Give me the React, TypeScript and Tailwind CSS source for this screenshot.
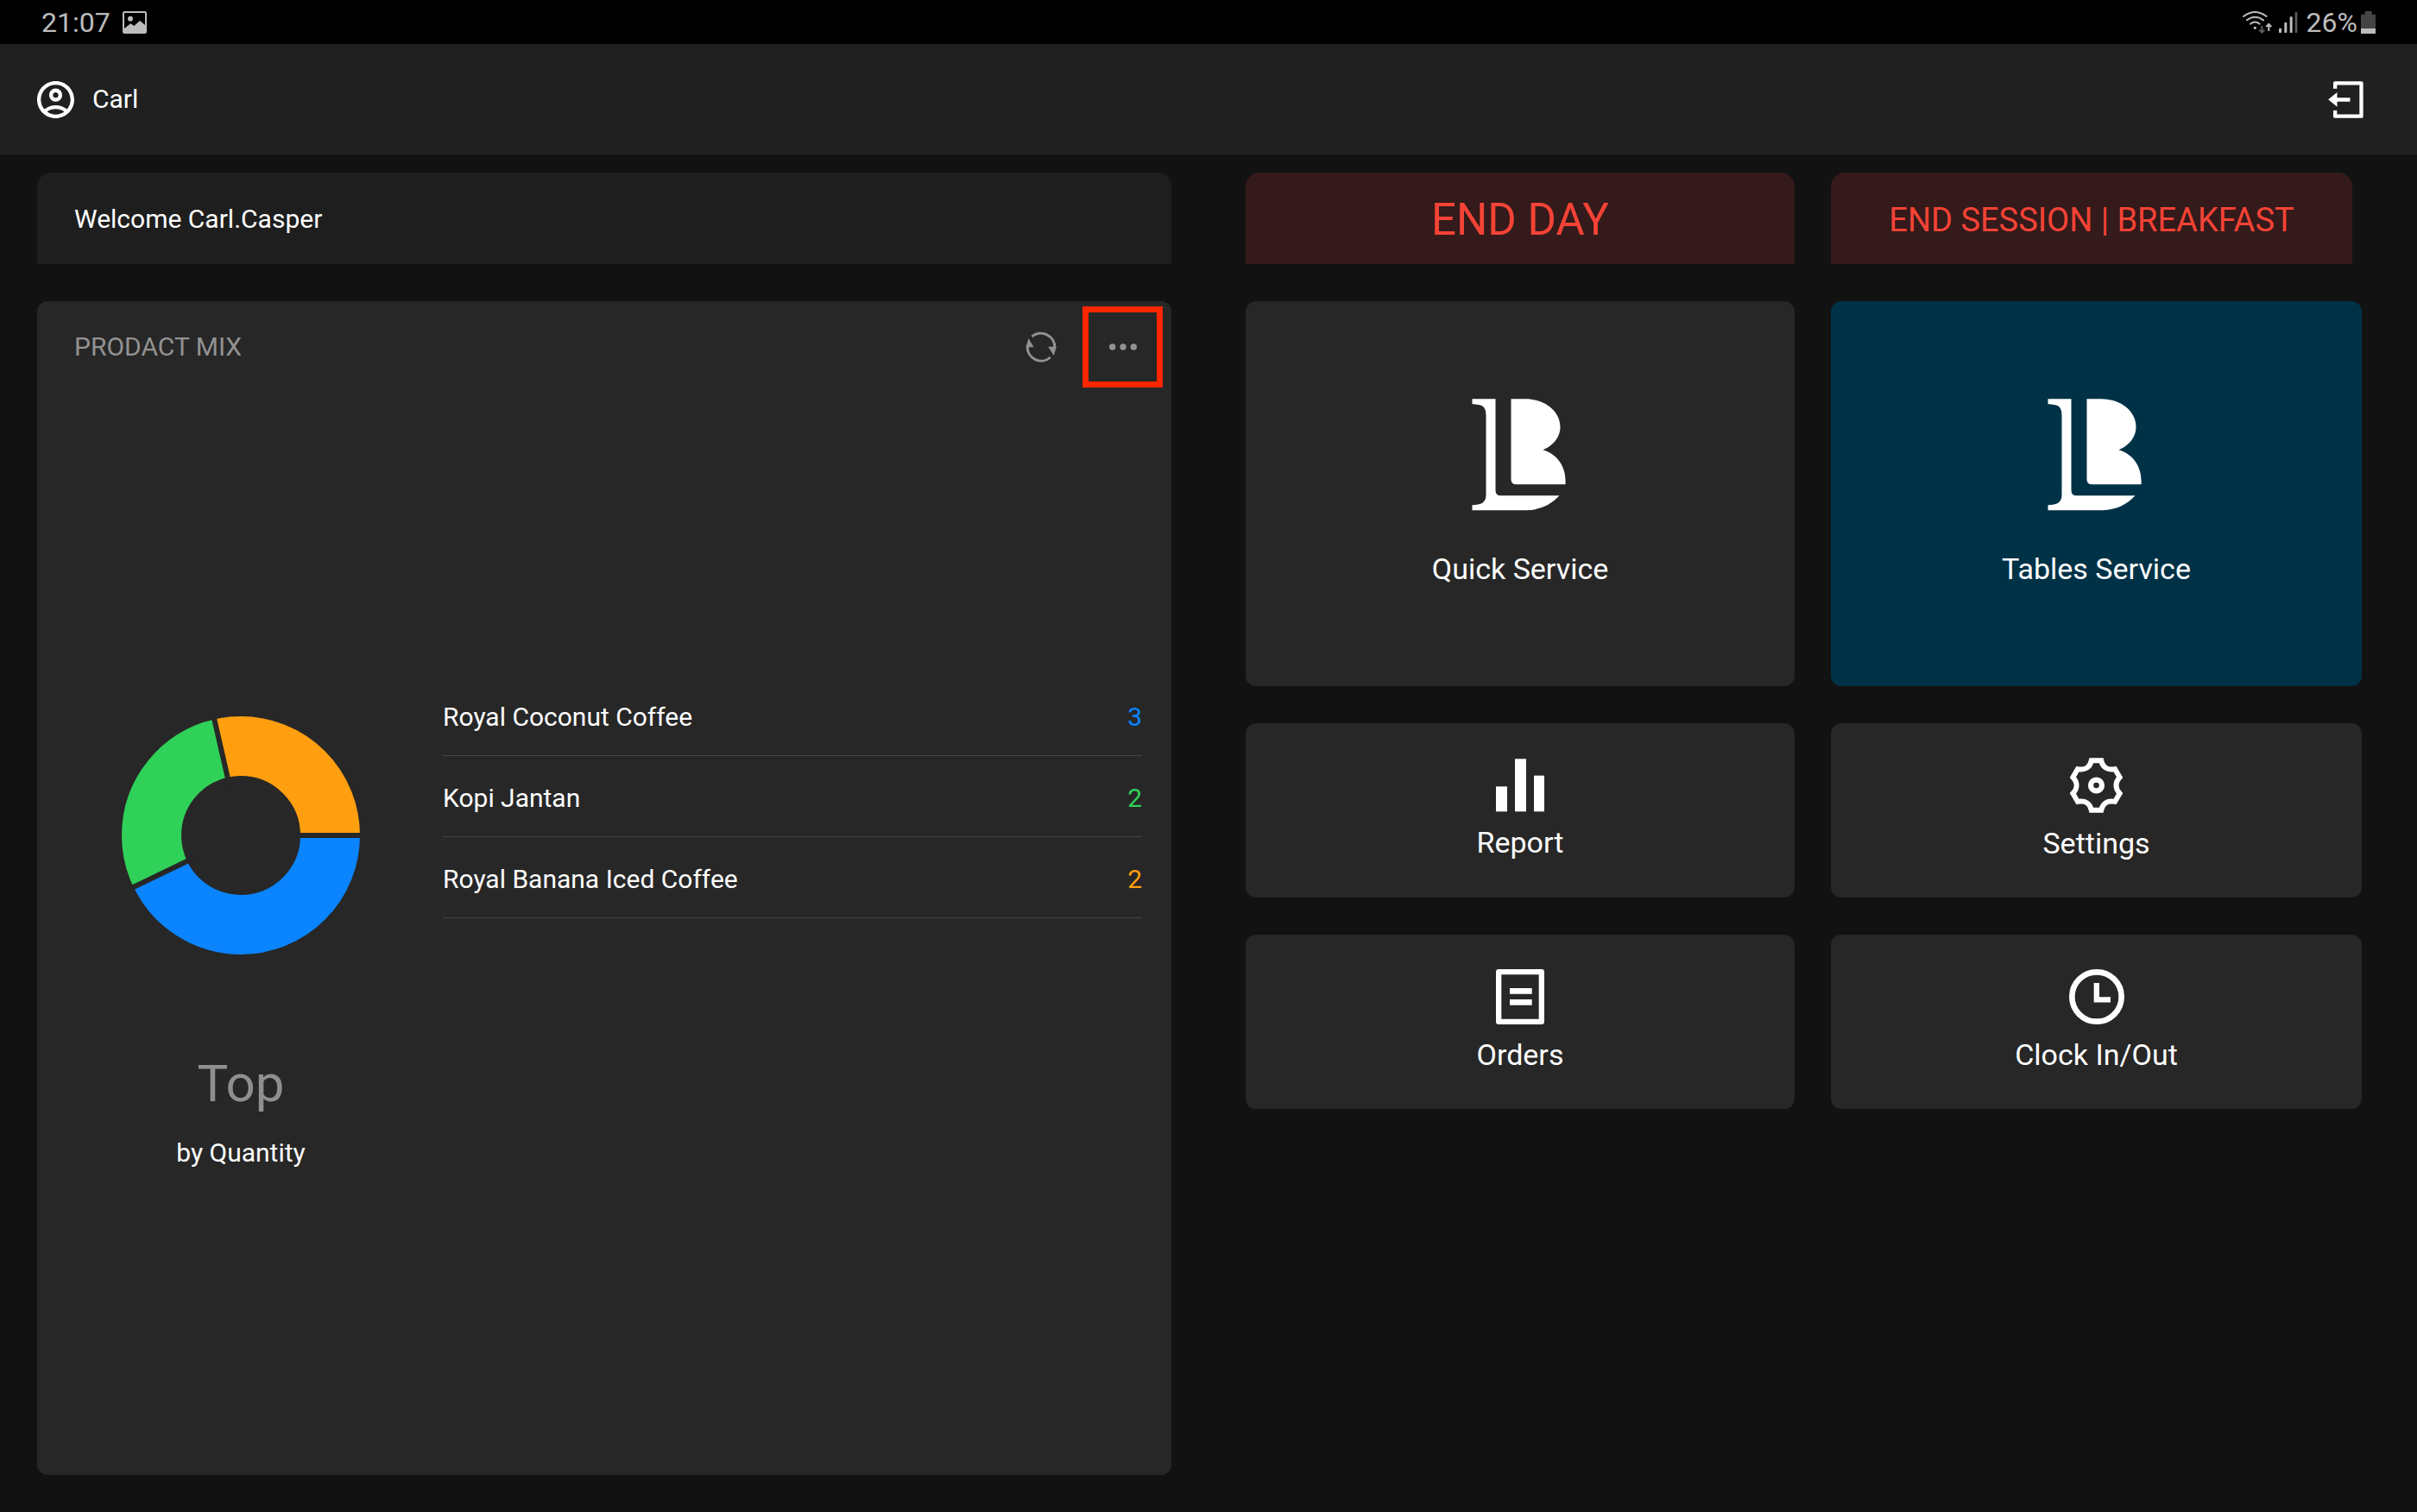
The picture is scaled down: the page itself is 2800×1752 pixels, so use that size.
import React from 'react';

interface MixItem {
  name: string;
  qty: number;
  color: string;
  textClass: string;
}

const mix: MixItem[] = [
  { name: 'Royal Coconut Coffee', qty: 3, color: '#0a84ff', textClass: 'text-[#0a84ff]' },
  { name: 'Kopi Jantan', qty: 2, color: '#30d158', textClass: 'text-[#30d158]' },
  { name: 'Royal Banana Iced Coffee', qty: 2, color: '#ff9f0f', textClass: 'text-[#ff9f0f]' },
];

const ImageIcon = () => (
  <svg viewBox="426 36 84 78" className="w-7 h-[26px]" aria-hidden="true">
    <rect x="429" y="39" width="78" height="72" rx="4" fill="none" stroke="#bdbdbd" strokeWidth="6" />
    <circle cx="453" cy="62" r="9" fill="#bdbdbd" />
    <path d="M432 96 L454 79 L466 87 L486 69 L504 84 V110 H432 Z" fill="#bdbdbd" />
  </svg>
);

const WifiIcon = () => (
  <svg viewBox="111 33 102 78" className="w-[34px] h-[26px]" aria-hidden="true">
    <g fill="none" stroke="#bdbdbd" strokeWidth="6" strokeLinecap="round">
      <path d="M114 51 Q154 21 194 51" />
      <path d="M126 64 Q154 42 183 64" />
      <path d="M138 77 Q154 64 170 77" />
    </g>
    <circle cx="154" cy="91" r="5" fill="#bdbdbd" />
    <path d="M178 84 V106 M169 98 L178 107 L187 98" fill="none" stroke="#5c5c5c" strokeWidth="6" />
    <path d="M202 102 V79 M193 87 L202 78 L211 87" fill="none" stroke="#bdbdbd" strokeWidth="6" />
  </svg>
);

const SignalIcon = () => (
  <svg viewBox="239 39 66 72" className="w-[22px] h-6" aria-hidden="true">
    <g fill="#bdbdbd">
      <rect x="239" y="95" width="9" height="16" rx="2" />
      <rect x="258" y="75" width="9" height="36" rx="2" />
      <rect x="277" y="55" width="9" height="56" rx="2" />
    </g>
    <rect x="295" y="39" width="8" height="72" rx="2" fill="#5c5c5c" />
  </svg>
);

const BatteryIcon = () => (
  <svg viewBox="525 33 51 78" className="w-[17px] h-[26px]" aria-hidden="true">
    <path d="M539 33 H563 V44 H576 V93 H525 V44 H539 Z" fill="#444444" />
    <rect x="525" y="93" width="51" height="18" fill="#bdbdbd" />
  </svg>
);

const AccountIcon = () => (
  <svg viewBox="2 2 20 20" className="w-[43px] h-[43px]" fill="currentColor" aria-hidden="true">
    <path d="M12 2C6.48 2 2 6.48 2 12s4.48 10 10 10 10-4.48 10-10S17.52 2 12 2zM7.35 18.5C8.66 17.56 10.26 17 12 17s3.34.56 4.65 1.5c-1.31.94-2.91 1.5-4.65 1.5s-3.34-.56-4.65-1.5zm10.79-1.38C16.45 15.8 14.32 15 12 15s-4.45.8-6.14 2.12C4.7 15.73 4 13.95 4 12c0-4.42 3.58-8 8-8s8 3.58 8 8c0 1.95-.7 3.73-1.86 5.12z" />
    <path d="M12 6c-1.93 0-3.5 1.57-3.5 3.5S10.07 13 12 13s3.5-1.57 3.5-3.5S13.93 6 12 6zm0 5c-.83 0-1.5-.67-1.5-1.5S11.17 8 12 8s1.5.67 1.5 1.5S12.83 11 12 11z" />
  </svg>
);

const LogoutIcon = () => (
  <svg viewBox="412 279 122 129" className="w-[41px] h-[43px]" aria-hidden="true">
    <path d="M436 305 V286 H527 V401 H436 V381" fill="none" stroke="currentColor" strokeWidth="13" strokeLinejoin="round" />
    <path d="M412 343 L443 318 V337 H488 V350 H443 V368 Z" fill="currentColor" />
  </svg>
);

const RefreshIcon = () => (
  <svg viewBox="143 162 107 108" className="w-9 h-9" aria-hidden="true">
    <g fill="none" stroke="currentColor" strokeWidth="9">
      <path d="M165 180 A48 48 0 0 1 244 218" />
      <path d="M229 252 A48 48 0 0 1 149 214" />
    </g>
    <path d="M221 215 H250 L241 246 Z M144 217 L153 186 L171 217 Z" fill="currentColor" />
  </svg>
);

const DotsIcon = () => (
  <svg viewBox="431 205 95 22" className="w-8 h-2" fill="currentColor" aria-hidden="true">
    <circle cx="442" cy="216" r="11" />
    <circle cx="478.5" cy="216" r="11" />
    <circle cx="515" cy="216" r="11" />
  </svg>
);

const BrandLogo = () => (
  <svg viewBox="194 97 338 390" className="w-[113px] h-[130px]" fill="currentColor" aria-hidden="true">
    <path d="M195 98 H276 V415 Q276 434 294 434 H498 Q455 482 385 485 H195 V467 C226 465 243 460 243 430 V155 C243 120 226 118 195 116 Z" />
    <path d="M330 98 H380 C450 98 501 142 501 195 C501 230 478 259 441 275 C492 290 523 335 519 395 H348 Q330 395 330 377 Z" />
  </svg>
);

const ReportIcon = () => (
  <svg viewBox="129 89 168 186" className="w-14 h-[62px]" fill="currentColor" aria-hidden="true">
    <rect x="129" y="186" width="39" height="87" />
    <rect x="195" y="90" width="39" height="183" />
    <rect x="261" y="148" width="36" height="125" />
  </svg>
);

const SettingsIcon = () => (
  <svg viewBox="115 87 184 192" className="w-[61px] h-16" fill="none" stroke="currentColor" aria-hidden="true">
    <path
      d="M190 96 H224 C228 118 245 132 272 126 L289 155 C272 172 272 194 289 211 L272 240 C245 234 228 248 224 270 H190 C186 248 169 234 142 240 L125 211 C142 194 142 172 125 155 L142 126 C169 132 186 118 190 96 Z"
      strokeWidth="18"
    />
    <circle cx="207" cy="183" r="19.5" strokeWidth="19" />
  </svg>
);

const OrdersIcon = () => (
  <svg viewBox="129 99 168 192" className="w-14 h-16" fill="none" stroke="currentColor" aria-hidden="true">
    <rect x="138.5" y="108.5" width="149" height="173" strokeWidth="19" strokeLinejoin="round" />
    <path d="M177 175 H254 M177 214 H254" strokeWidth="20" />
  </svg>
);

const ClockIcon = () => (
  <svg viewBox="228 99 192 192" className="w-16 h-16" fill="none" stroke="currentColor" aria-hidden="true">
    <circle cx="324" cy="195" r="86" strokeWidth="20" />
    <path d="M323.5 147 V205 H372" strokeWidth="19" />
  </svg>
);

const Donut: React.FC<{ items: MixItem[] }> = ({ items }) => {
  const total = items.reduce((sum, it) => sum + it.qty, 0);
  const starts = items.map((_, idx) => items.slice(0, idx).reduce((sum, it) => sum + it.qty, 0));

  return (
    <svg viewBox="-138 -138 276 276" className="w-[276px] h-[276px]" role="img" aria-label="Product mix">
      {items.map((it, idx) => (
        <circle
          key={it.name}
          r="103.5"
          fill="none"
          stroke={it.color}
          strokeWidth="69"
          pathLength={total}
          strokeDasharray={`${it.qty} ${total - it.qty}`}
          strokeDashoffset={-starts[idx]}
        />
      ))}
      {/* gaps between the slices */}
      {starts.map((start) => (
        <line
          key={start}
          x1="60"
          x2="140"
          stroke="#272727"
          strokeWidth="6"
          transform={`rotate(${(start / total) * 360})`}
        />
      ))}
    </svg>
  );
};

const ServiceTile: React.FC<{ label: string; active?: boolean }> = ({ label, active }) => (
  <button
    className={`h-[446px] pb-1 rounded-xl flex flex-col items-center justify-center gap-[47px] ${
      active ? 'bg-[#003247]' : 'bg-[#272727]'
    }`}
  >
    <BrandLogo />
    <span className="text-[34px] leading-10">{label}</span>
  </button>
);

const MenuTile: React.FC<{ label: string; icon: React.ReactNode }> = ({ label, icon }) => (
  <button className="h-[202px] pb-1 rounded-xl bg-[#272727] flex flex-col items-center justify-center gap-[15px]">
    {icon}
    <span className="text-[34px] leading-10">{label}</span>
  </button>
);

const App: React.FC = () => {
  return (
    <div className="min-h-screen flex flex-col bg-[#121212] text-white font-[Roboto,sans-serif]">
      <div className="h-[51px] px-12 flex items-center justify-between bg-black text-[#bdbdbd] text-[32px] leading-9">
        <div className="flex items-center gap-[14px]">
          <span>21:07</span>
          <ImageIcon />
        </div>
        <div className="flex items-center">
          <WifiIcon />
          <span className="ml-2 mr-[10px]">
            <SignalIcon />
          </span>
          <span className="mr-1">26%</span>
          <BatteryIcon />
        </div>
      </div>

      <header className="h-32 pl-[43px] pr-[62px] flex items-center justify-between bg-[#202020]">
        <button className="flex items-center gap-[21px] text-[30px] leading-9">
          <AccountIcon />
          <span>Carl</span>
        </button>
        <button aria-label="Log out">
          <LogoutIcon />
        </button>
      </header>

      <main className="flex-1 grid grid-cols-[1314fr_1293fr] gap-[86px] pt-[21px] pb-[43px] pl-[43px] pr-16">
        <div className="flex flex-col gap-[43px]">
          <div className="h-[106px] pt-0.5 px-[43px] flex items-center rounded-t-2xl bg-[#1e1e1e] text-[30px] leading-9">
            Welcome Carl.Casper
          </div>

          <section className="flex-1 flex flex-col rounded-xl bg-[#272727]">
            <div className="h-[106px] pl-[43px] pr-[10px] flex items-center text-[#929292]">
              <h2 className="flex-1 text-[30px] leading-9">PRODACT MIX</h2>
              <button aria-label="Refresh" className="mr-[30px]">
                <RefreshIcon />
              </button>
              <button
                aria-label="More"
                className="w-[93px] h-[94px] flex items-center justify-center border-[7px] border-[#ff2600]"
              >
                <DotsIcon />
              </button>
            </div>

            <div className="flex-1 flex items-center pt-0.5">
              <div className="flex-1 flex items-start pr-[34px]">
                <div className="w-[470px] pl-0.5 pt-12 pb-[30px] flex flex-col items-center">
                  <Donut items={mix} />
                  <p className="mt-[115px] text-[60px] leading-[70px] text-[#8f8f8f]">Top</p>
                  <p className="mt-[27px] text-[30px] leading-9">by Quantity</p>
                </div>
                <ul className="flex-1 text-[30px] leading-9">
                  {mix.map((it) => (
                    <li
                      key={it.name}
                      className="h-[94px] pt-1 flex items-center justify-between border-b border-[#444444]"
                    >
                      <span>{it.name}</span>
                      <span className={it.textClass}>{it.qty}</span>
                    </li>
                  ))}
                </ul>
              </div>
            </div>
          </section>
        </div>

        <div className="grid grid-cols-[636fr_615fr] content-start gap-x-[42px] gap-y-[43px]">
          <button className="h-[106px] pt-1 rounded-t-2xl bg-[#341a1a] text-[#f44336] text-[51px] leading-[60px]">
            END DAY
          </button>
          <button className="h-[106px] pt-1 mr-[11px] rounded-t-2xl bg-[#341a1a] text-[#f44336] text-[38px] leading-[44px]">
            END SESSION | BREAKFAST
          </button>
          <ServiceTile label="Quick Service" />
          <ServiceTile label="Tables Service" active />
          <MenuTile label="Report" icon={<ReportIcon />} />
          <MenuTile label="Settings" icon={<SettingsIcon />} />
          <MenuTile label="Orders" icon={<OrdersIcon />} />
          <MenuTile label="Clock In/Out" icon={<ClockIcon />} />
        </div>
      </main>
    </div>
  );
};

export default App;
